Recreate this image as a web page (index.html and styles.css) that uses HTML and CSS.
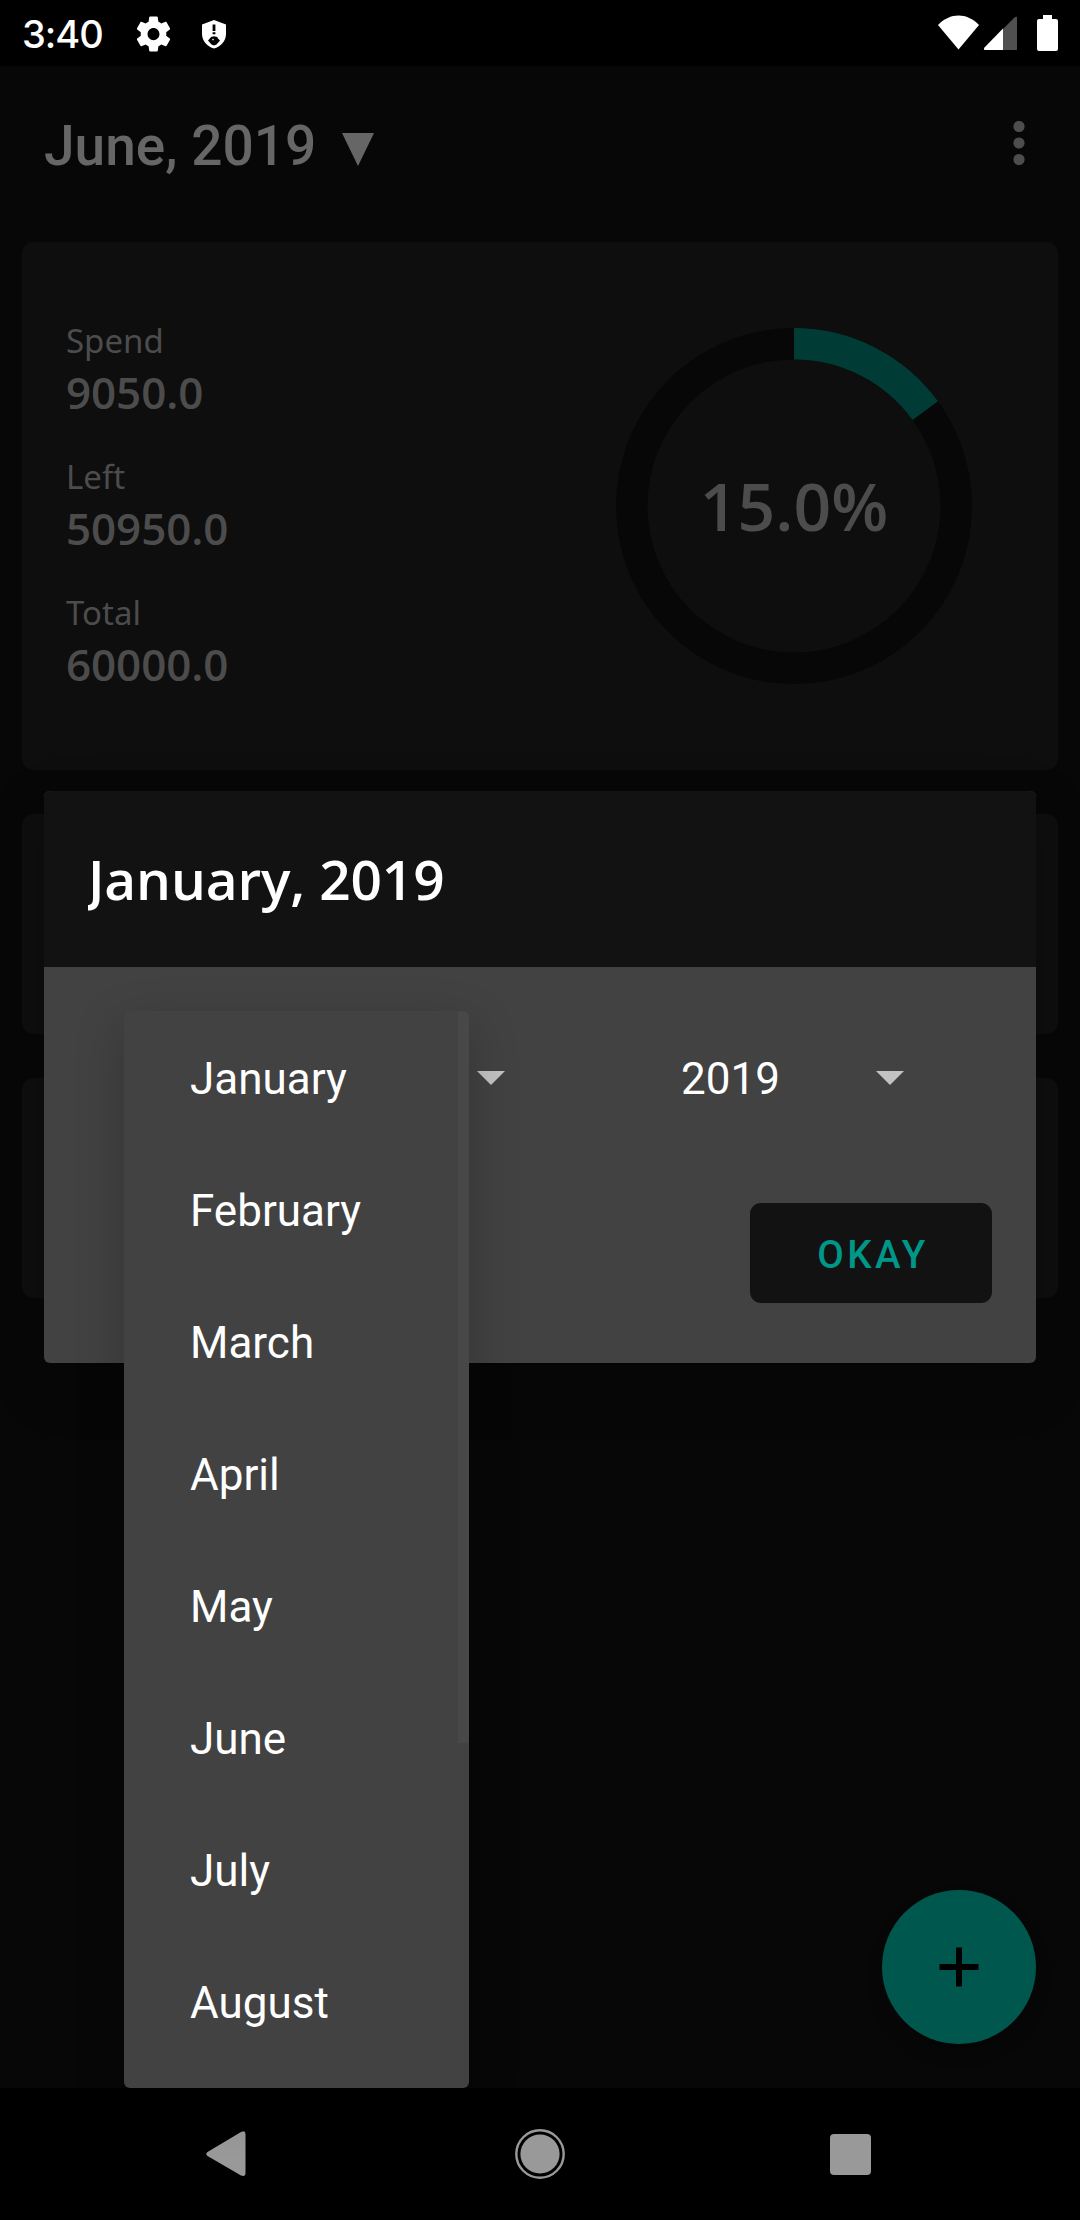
FILE: index.html
```html
<!DOCTYPE html>
<html lang="en">
<head>
<meta charset="utf-8">
<title>Budget</title>
<link rel="stylesheet" href="styles.css">
</head>
<body>
<div class="screen">
  <header class="status">
    <span class="clock">3:40</span>
    <svg class="gear" width="41" height="42" viewBox="0 0 24 24" preserveAspectRatio="none"><path fill="#fff" d="M19.43 12.98c.04-.32.07-.64.07-.98s-.03-.66-.07-.98l2.11-1.65c.19-.15.24-.42.12-.64l-2-3.46c-.12-.22-.39-.3-.61-.22l-2.49 1c-.52-.4-1.08-.73-1.69-.98l-.38-2.65C14.46 2.18 14.25 2 14 2h-4c-.25 0-.46.18-.49.42l-.38 2.65c-.61.25-1.17.59-1.69.98l-2.49-1c-.23-.09-.49 0-.61.22l-2 3.46c-.13.22-.07.49.12.64l2.11 1.65c-.04.32-.07.65-.07.98s.03.66.07.98l-2.11 1.65c-.19.15-.24.42-.12.64l2 3.46c.12.22.39.3.61.22l2.49-1c.52.4 1.08.73 1.69.98l.38 2.65c.03.24.24.42.49.42h4c.25 0 .46-.18.49-.42l.38-2.65c.61-.25 1.17-.59 1.69-.98l2.49 1c.23.09.49 0 .61-.22l2-3.46c.12-.22.07-.49-.12-.64l-2.11-1.65zM12 15.5c-1.93 0-3.5-1.57-3.5-3.5s1.57-3.5 3.5-3.5 3.5 1.57 3.5 3.5-1.57 3.5-3.5 3.5z"/></svg>
    <svg class="shield" width="24" height="29" viewBox="0 0 24 29"><path fill="#fff" d="M12 0 24 4.5V14C24 21 18.5 27 12 28.5 5.500 27 0 21 0 14V4.500z"/><path d="M10.600 4.500h2.800v6.500h-2.800zM10.600 12.300h2.800v2h-2.800zM6 20.500 8 18.300 9 17 12 16.200 15.200 17 16 18.500 18 20.500 14.500 24.500 12 25.500 9.500 24.500z"/><circle cx="11" cy="19.600" r=".8" fill="#fff"/></svg>
    <span class="grow"></span>
    <svg width="120" height="36" viewBox="0 0 120 36"><path fill="#fff" d="M0 10C12-2.700 29-2.700 41 10L20.500 34.500z"/><path fill="#505050" d="M65 14 76.500 2.500Q79 1 79 3V34.500Q79 35 78 35H65z"/><path fill="#fff" d="M65 13.500V35H47Q45 34.500 46.500 32.500z"/><path fill="#fff" d="M105 0h9v4h4q2 0 2 2v28q0 2-2 2h-17q-2 0-2-2V6q0-2 2-2h4z"/></svg>
  </header>

  <main class="app">
    <div class="toolbar">
      <span class="title">June, 2019</span>
      <svg class="tri" width="32" height="33" viewBox="0 0 32 33"><path fill="#666" d="M0 0h32L16 33z"/></svg>
      <span class="grow"></span>
      <svg width="12" height="44" viewBox="0 0 12 44"><g fill="#4d4d4d"><circle cx="6" cy="5.500" r="5.600"/><circle cx="6" cy="22" r="5.600"/><circle cx="6" cy="38.500" r="5.600"/></g></svg>
    </div>
    <section class="card summary">
      <dl class="figures">
        <div class="figure"><dt>Spend</dt><dd>9050.0</dd></div>
        <div class="figure"><dt>Left</dt><dd>50950.0</dd></div>
        <div class="figure"><dt>Total</dt><dd>60000.0</dd></div>
      </dl>
      <div class="donut">
        <svg class="ring" width="356" height="356" viewBox="-178 -178 356 356"><g fill="none" stroke-width="31.500"><circle r="162.250" stroke="#070707"/><path stroke="#003c35" d="M0-162.250A162.250 162.250 0 0 1 131.260-95.370"/></g></svg>
        <span class="percent">15.0%</span>
      </div>
    </section>
    <section class="card small"></section>
    <section class="card small"></section>
    <div class="fab"><svg width="40" height="40" viewBox="0 0 40 40"><path d="M17 0.500h6v16.500h16.500v6H23v16.500h-6V23H0.500v-6H17z"/></svg></div>

    <div class="dialog">
      <div class="dialog-head"><h1>January, 2019</h1></div>
      <div class="dialog-body">
        <div class="pickers">
          <div class="picker"><span></span><svg width="28" height="14" viewBox="0 0 28 14"><path fill="#c3c3c3" d="M0 0h28L14 14z"/></svg></div>
          <div class="picker"><span>2019</span><svg width="28" height="14" viewBox="0 0 28 14"><path fill="#c3c3c3" d="M0 0h28L14 14z"/></svg></div>
        </div>
        <button class="okay">OKAY</button>
      </div>
    </div>
    <ul class="menu">
      <li>January</li><li>February</li><li>March</li><li>April</li><li>May</li><li>June</li><li>July</li><li>August</li>
    </ul>
  </main>

  <nav class="nav">
    <svg width="40" height="46" viewBox="0 0 40 46"><path fill="#999" d="M1.500 21 35 1Q39.500-1 39.500 3V42Q39.500 46 35 44.500L1.500 25Q-1 23 1.500 21z"/></svg>
    <svg width="50" height="50" viewBox="0 0 50 50"><circle cx="25" cy="25" r="23.700" fill="none" stroke="#999" stroke-width="2.400"/><circle cx="25" cy="25" r="19.600" fill="#999"/></svg>
    <span class="recent"></span>
  </nav>
</div>
</body>
</html>
```
FILE: styles.css
```css
* { box-sizing: border-box; margin: 0; padding: 0; }
body { background: #000; font-family: Roboto, sans-serif; }
.screen { width: 1080px; height: 2220px; display: flex; flex-direction: column; overflow: hidden; }
.grow { flex: 1; }
svg { display: block; flex: none; }

.status { height: 66px; display: flex; align-items: flex-start; padding: 15px 22px 0 22px; color: #fff; }
.clock { width: 84px; font: 500 38px/38px Inter, sans-serif; letter-spacing: -1px; white-space: nowrap; }
.gear { margin: -2px 0 0 27px; }
.shield { margin: 5px 0 0 28px; }

.app { position: relative; flex: 1; background: #070707; padding: 0 22px; }
.toolbar { height: 176px; display: flex; padding: 0 33px 0 22px; }
.title { font-size: 55px; line-height: 64px; font-weight: 500; color: #666; margin-top: 48px; white-space: nowrap; }
.tri { margin: 67px 0 0 26px; }
.toolbar svg:last-child { margin-top: 55px; }

.card { background: #0e0e0e; border-radius: 11px; margin-bottom: 44px; }
.summary { height: 528px; display: flex; justify-content: space-between; align-items: flex-start; padding: 76px 86px 0 44px; font-family: "Noto Sans", sans-serif; color: #4c4c4c; }
.figure { height: 136px; }
.figure dt { font-size: 33px; line-height: 45px; }
.figure dd { font: 600 44px/58px "Open Sans", sans-serif; letter-spacing: -0.1px; }
.donut { display: grid; place-items: center; width: 356px; height: 356px; margin-top: 10px; }
.ring, .percent { grid-area: 1 / 1; }
.percent { font: 600 66px/90px "Open Sans", sans-serif; margin-bottom: 2px; }
.small { height: 220px; }

.fab { position: absolute; right: 44px; bottom: 44px; width: 154px; height: 154px; border-radius: 50%; background: #00574e; display: grid; place-items: center; box-shadow: 0 10px 16px rgba(0, 0, 0, .2); }

.dialog { position: absolute; left: 44px; top: 725px; width: 992px; height: 572px; border-radius: 6px; background: #424242; overflow: hidden; box-shadow: 0 20px 60px rgba(0, 0, 0, .2); }
.dialog-head { height: 176px; background: #121212; padding: 50px 44px 0; }
.dialog-head h1 { font: 600 55px/75px "Open Sans", sans-serif; letter-spacing: -0.15px; color: #fff; overflow: hidden; white-space: nowrap; }
.dialog-body { display: flex; flex-direction: column; padding: 44px; }
.pickers { display: flex; height: 134px; padding: 0 88px 0 36px; }
.picker { flex: none; width: 222px; display: flex; justify-content: space-between; align-items: center; font-size: 44px; line-height: 52px; color: #fff; }
.picker + .picker { margin-left: 177px; }
.picker:first-child { width: 381px; }
.picker span { position: relative; top: 1px; left: -1px; }
.okay { align-self: flex-end; width: 242px; height: 100px; margin-top: 58px; border: 0; border-radius: 11px; background: #121212; color: #009688; font: 500 38.5px/46px Roboto, sans-serif; letter-spacing: 3.4px; padding: 3px 0 0 4px; }

.menu { position: absolute; left: 124px; top: 945px; width: 345px; height: 1077px; background: #424242; border-radius: 6px; list-style: none; padding: 2px 0 0 66px; overflow: hidden; box-shadow: 0 16px 50px rgba(0, 0, 0, .22); }
.menu::after { content: ""; position: absolute; right: 0; top: 0; width: 11px; height: 732px; background: #484848; }
.menu li { height: 132px; font-size: 44px; line-height: 132px; color: #fff; }

.nav { height: 132px; display: flex; align-items: center; padding-left: 206px; }
.nav svg:nth-child(2) { margin-left: 269px; }
.recent { width: 41px; height: 41px; margin-left: 265px; border-radius: 4px; background: #999; }
```
